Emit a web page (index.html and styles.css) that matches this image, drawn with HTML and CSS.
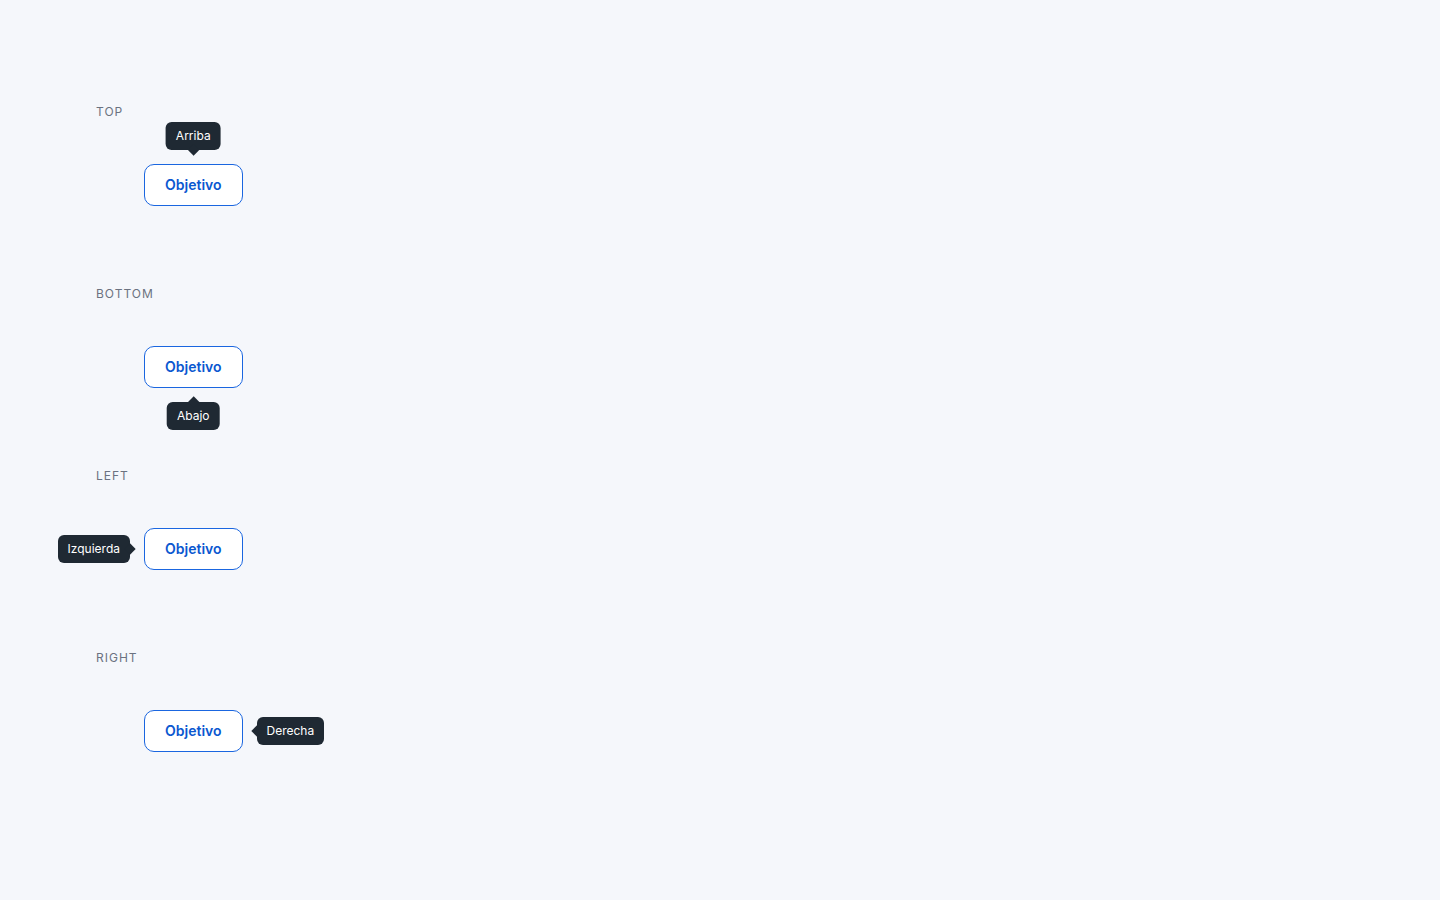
FILE: index.html
```html
<!DOCTYPE html>
<html lang="es">
<head>
<meta charset="UTF-8">
<meta name="viewport" content="width=device-width, initial-scale=1.0">
<title>Tooltip</title>
<link rel="stylesheet" href="styles.css">
</head>
<body>

<main class="demos">

  <!-- Top -->
  <section class="demo">
    <h2 class="demo-label">Top</h2>
    <div class="stage">
      <div class="anchor">
        <button class="target">Objetivo</button>
        <span class="tooltip tooltip-top">Arriba</span>
      </div>
    </div>
  </section>

  <!-- Bottom -->
  <section class="demo">
    <h2 class="demo-label">Bottom</h2>
    <div class="stage">
      <div class="anchor">
        <button class="target">Objetivo</button>
        <span class="tooltip tooltip-bottom">Abajo</span>
      </div>
    </div>
  </section>

  <!-- Left -->
  <section class="demo">
    <h2 class="demo-label">Left</h2>
    <div class="stage">
      <div class="anchor">
        <button class="target">Objetivo</button>
        <span class="tooltip tooltip-left">Izquierda</span>
      </div>
    </div>
  </section>

  <!-- Right -->
  <section class="demo">
    <h2 class="demo-label">Right</h2>
    <div class="stage">
      <div class="anchor">
        <button class="target">Objetivo</button>
        <span class="tooltip tooltip-right">Derecha</span>
      </div>
    </div>
  </section>

</main>

</body>
</html>
```

FILE: styles.css
```css
/* Reset */
* {
  margin: 0;
  padding: 0;
  box-sizing: border-box;
}
body, html {
  min-height: 100%;
  font-family: Inter, "Noto Sans", Arial, sans-serif;
  background: #f5f7fb;
  color: #1f2933;
}

/* Demo list */
.demos {
  display: flex;
  flex-direction: column;
  gap: 35px;
  padding: 104px 96px;
}
.demo-label {
  font-size: 12px;
  line-height: 16px;
  font-weight: 400;
  letter-spacing: 1px;
  text-transform: uppercase;
  color: #6b7280;
}
.stage {
  padding: 44px 48px 45px;
}

/* Target button */
.anchor {
  position: relative;
  display: inline-block;
}
.target {
  display: block;
  height: 42px;
  padding: 0 20px 1px;
  border: 1px solid #1a66e0;
  border-radius: 10px;
  background: #fff;
  color: #0b57d0;
  font-family: inherit;
  font-size: 14px;
  font-weight: 600;
  cursor: pointer;
}

/* Tooltip */
.tooltip {
  position: absolute;
  padding: 5px 10px;
  border-radius: 6px;
  background: #1f2933;
  color: #fff;
  font-size: 12px;
  line-height: 18px;
  white-space: nowrap;
}
.tooltip::after {
  content: "";
  position: absolute;
  width: 8px;
  height: 8px;
  background: inherit;
  transform: rotate(45deg);
}
.tooltip-top {
  bottom: calc(100% + 14px);
  left: 50%;
  transform: translateX(-50%);
}
.tooltip-top::after {
  bottom: -4px;
  left: calc(50% - 4px);
}
.tooltip-bottom {
  top: calc(100% + 14px);
  left: 50%;
  transform: translateX(-50%);
}
.tooltip-bottom::after {
  top: -4px;
  left: calc(50% - 4px);
}
.tooltip-left {
  right: calc(100% + 14px);
  top: 50%;
  transform: translateY(-50%);
}
.tooltip-left::after {
  right: -4px;
  top: calc(50% - 4px);
}
.tooltip-right {
  left: calc(100% + 14px);
  top: 50%;
  transform: translateY(-50%);
}
.tooltip-right::after {
  left: -4px;
  top: calc(50% - 4px);
}
```
